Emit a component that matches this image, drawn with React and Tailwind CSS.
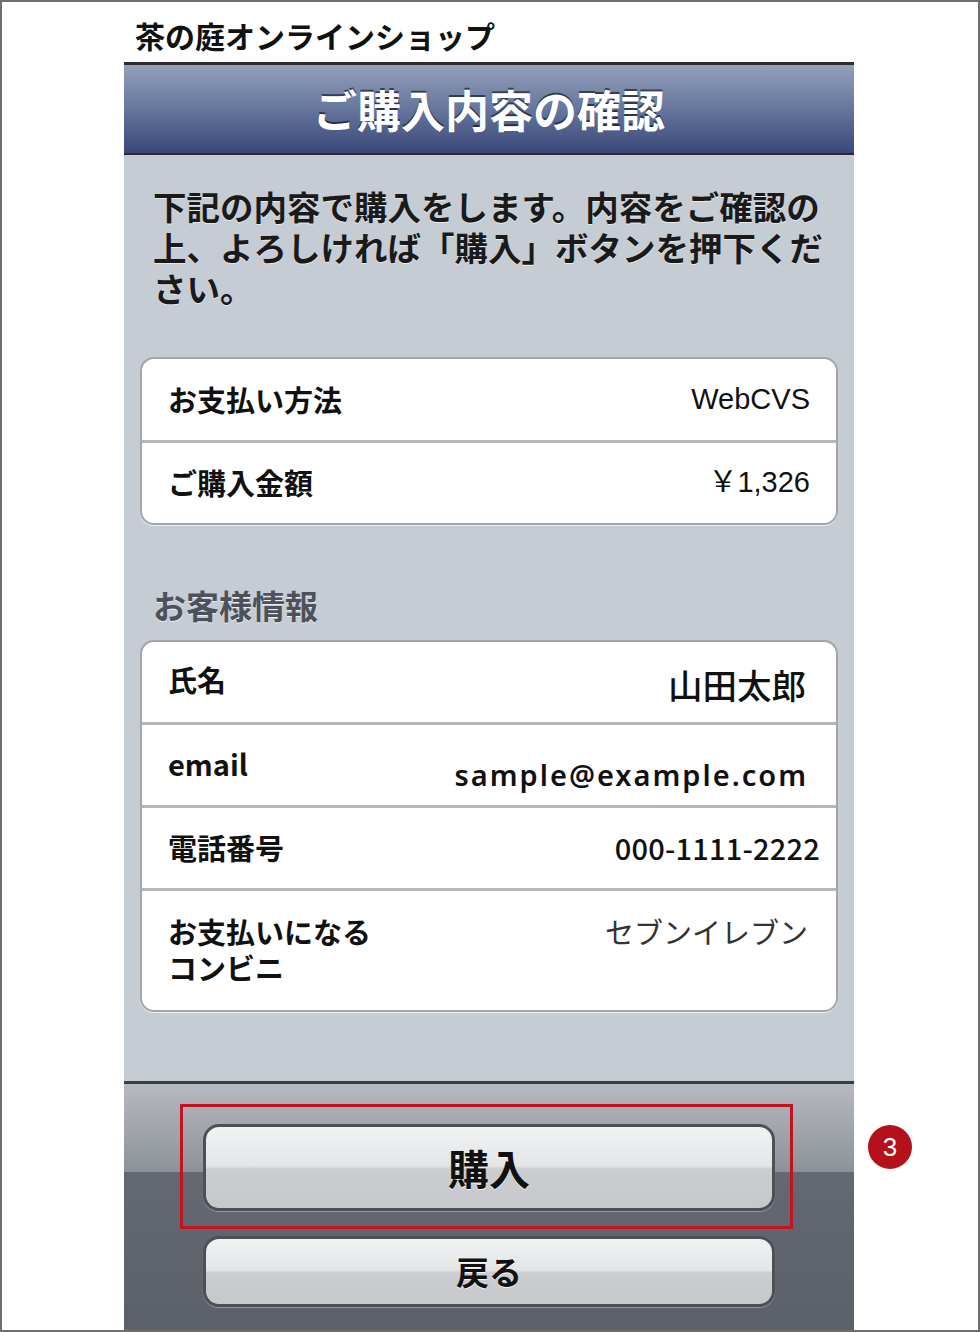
import React from "react";

const JP = { fontFamily: '"Noto Sans CJK JP", "Noto Sans", sans-serif' };

function Row({ children, className = "" }) {
  return <div className={"flex " + className}>{children}</div>;
}

export default function App() {
  return (
    <div
      className="relative w-[980px] h-[1332px] overflow-hidden border-2 border-[#6f6f6f] bg-white"
      style={JP}
    >
      <div className="ml-[122px] flex h-full w-[730px] flex-col">
        {/* shop title */}
        <div className="h-[60px] pt-[18px] pl-[11px] text-[30px] font-bold leading-[30px] text-[#111]">
          茶の庭オンラインショップ
        </div>

        {/* nav header */}
        <div className="flex h-[93px] items-center justify-center border-t-[3px] border-b-2 border-t-[#2c2c2e] border-b-[#262b38] bg-[linear-gradient(to_bottom,#93a1bb_0%,#6a7aa0_45%,#3a4878_100%)]">
          <span className="text-[44px] font-bold leading-none text-white [text-shadow:0_-2px_0_rgba(0,0,0,0.55)]">
            ご購入内容の確認
          </span>
        </div>

        {/* content */}
        <div className="flex flex-col bg-[#c5ccd4] pt-[30px] pb-[69px]">
          <div className="pl-[29px] text-[33.5px] font-bold leading-[41px] text-[#1a1a1a] [text-shadow:0_1px_0_rgba(255,255,255,0.6)]">
            <div className="whitespace-nowrap">下記の内容で購入をします。内容をご確認の</div>
            <div className="whitespace-nowrap">上、よろしければ「購入」ボタンを押下くだ</div>
            <div className="whitespace-nowrap">さい。</div>
          </div>

          {/* card 1 */}
          <div className="mx-[16px] mt-[49px] overflow-hidden rounded-[14px] border-2 border-[#a2a6ac] bg-white shadow-[0_1px_0_rgba(255,255,255,0.7)]">
            <Row className="h-[84px] items-center justify-between border-b-[3px] border-[#b3b6ba] px-[26px]">
              <span className="text-[29px] font-bold text-[#111]">お支払い方法</span>
              <span
                className="text-[29px] text-[#111]"
                style={{ fontFamily: '"Liberation Sans", Arial, sans-serif' }}
              >
                WebCVS
              </span>
            </Row>
            <Row className="h-[80px] items-center justify-between px-[26px]">
              <span className="text-[29px] font-bold text-[#111]">ご購入金額</span>
              <span
                className="text-[29px] text-[#111]"
                style={{ fontFamily: '"Liberation Sans", "Noto Sans CJK JP", Arial, sans-serif' }}
              >
                ￥1,326
              </span>
            </Row>
          </div>

          <div className="mt-[60px] pl-[29px] text-[33px] font-bold leading-[40px] text-[#4d525a] [text-shadow:0_1px_0_rgba(255,255,255,0.7)]">
            お客様情報
          </div>

          {/* card 2 */}
          <div className="mx-[16px] mt-[15px] overflow-hidden rounded-[14px] border-2 border-[#a2a6ac] bg-white shadow-[0_1px_0_rgba(255,255,255,0.7)]">
            <Row className="h-[83px] items-center justify-between border-b-[3px] border-[#b3b6ba] pl-[26px] pr-[30px]">
              <span className="-mt-[4px] text-[29px] font-bold text-[#111]">氏名</span>
              <span className="mt-[6px] text-[34.5px] font-medium text-[#111]">山田太郎</span>
            </Row>
            <Row className="h-[83px] items-center justify-between border-b-[3px] border-[#b3b6ba] pl-[26px] pr-[28px]">
              <span className="-mt-[2px] text-[29px] font-bold text-[#111]">email</span>
              <span
                className="mt-[20px] text-[29px] font-semibold tracking-[2px] text-[#111]"
                style={{ fontFamily: '"Noto Sans", sans-serif' }}
              >
                sample@example.com
              </span>
            </Row>
            <Row className="h-[83px] items-center justify-between border-b-[3px] border-[#b3b6ba] pl-[26px] pr-[16px]">
              <span className="text-[29px] font-bold text-[#111]">電話番号</span>
              <span className="text-[29px] font-medium tracking-[0.2px] text-[#111]">000-1111-2222</span>
            </Row>
            <Row className="h-[119px] items-start justify-between pl-[26px] pr-[28px] pt-[22px]">
              <span className="text-[29px] font-bold leading-[36px] text-[#111]">
                お支払いになる
                <br />
                コンビニ
              </span>
              <span className="text-[29px] leading-[36px] text-[#333]">セブンイレブン</span>
            </Row>
          </div>
        </div>

        {/* toolbar */}
        <div className="relative flex flex-1 flex-col border-t-[3px] border-[#3a3d43] bg-[linear-gradient(to_bottom,#b6bac0_0px,#9a9ea5_60px,#8d9198_88px,#646971_88px,#5c6169_100%)] pt-[40px]">
          <button className="mx-auto flex h-[87px] w-[572px] items-center justify-center rounded-[16px] border-[3px] border-[#4c5057] bg-[linear-gradient(to_bottom,#f1f2f3_0%,#e3e5e7_48%,#cbcdd0_52%,#c6c8cb_100%)] shadow-[0_1px_1px_rgba(255,255,255,0.35)]">
            <span className="text-[41px] font-bold leading-none text-[#111] [text-shadow:0_1px_0_rgba(255,255,255,0.8)]">
              購入
            </span>
          </button>
          <button className="mx-auto mt-[25px] flex h-[71px] w-[572px] items-center justify-center rounded-[16px] border-[3px] border-[#4c5057] bg-[linear-gradient(to_bottom,#f1f2f3_0%,#e3e5e7_48%,#cbcdd0_52%,#c6c8cb_100%)] shadow-[0_1px_1px_rgba(255,255,255,0.35)]">
            <span className="text-[33px] font-bold leading-none text-[#111] [text-shadow:0_1px_0_rgba(255,255,255,0.8)]">
              戻る
            </span>
          </button>

          {/* annotation frame */}
          <div className="pointer-events-none absolute left-[56px] top-[20px] h-[125px] w-[613px] border-[3px] border-[#c4121e]" />
        </div>
      </div>

      {/* annotation number */}
      <div
        className="absolute left-[866px] top-[1123px] flex h-[44px] w-[44px] items-center justify-center rounded-full bg-[#b5111c] text-[26px] leading-none text-white"
        style={{ fontFamily: '"Liberation Sans", Arial, sans-serif' }}
      >
        3
      </div>
    </div>
  );
}
